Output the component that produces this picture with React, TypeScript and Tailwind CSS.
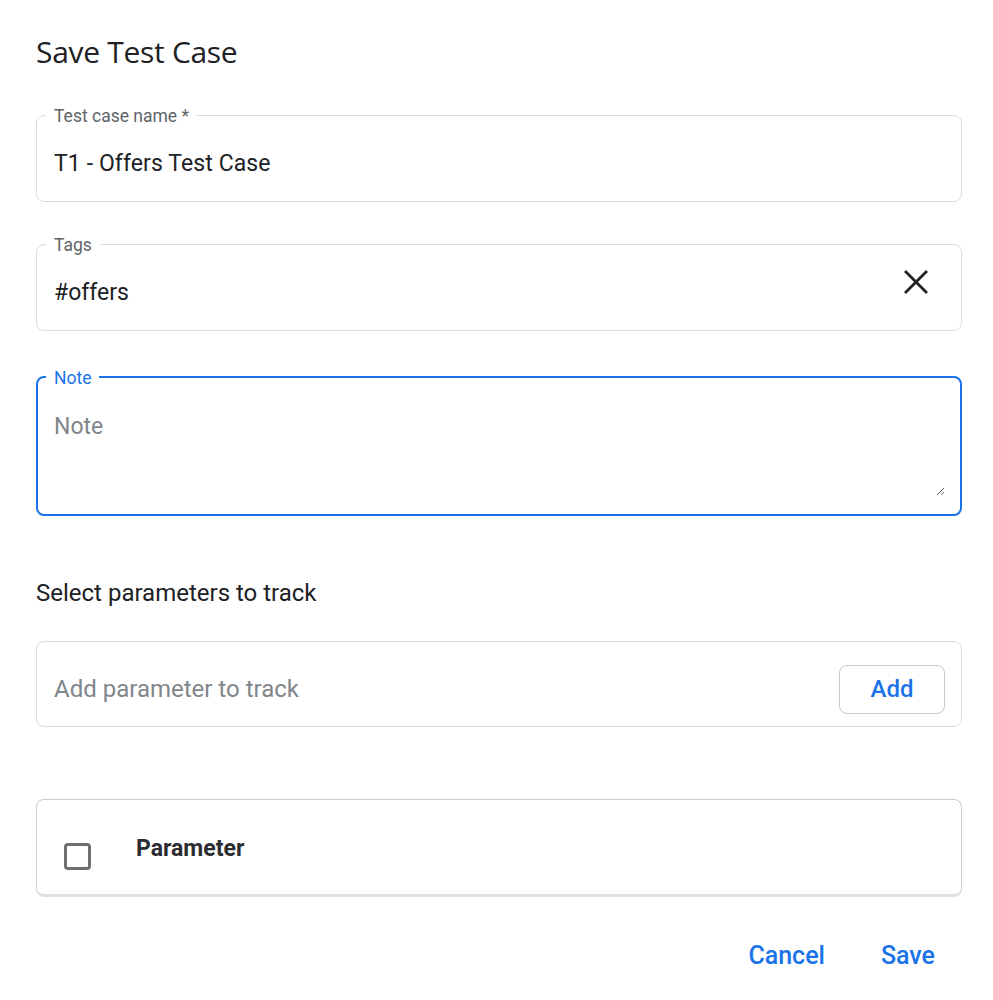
// ─── Outlined field (fieldset + legend notch) ───────────────────────────────
type FieldProps = {
    label: string;
    focused?: boolean;
    children: React.ReactNode;
};

const OutlinedField = ({ label, focused, children }: FieldProps) => (
    <fieldset
        className={
            focused
                ? "rounded-lg border-2 border-[#1a73e8] pl-[8px] pr-[15px]"
                : "rounded-lg border border-[#dadce0] pl-[9px] pr-4"
        }
    >
        <legend
            className={
                focused
                    ? "px-2 pt-[2px] text-[17.5px] leading-[18px] text-[#1a73e8]"
                    : "px-2 pt-[2px] text-[17.5px] leading-[18px] text-[#5f6368]"
            }
        >
            {label}
        </legend>
        {children}
    </fieldset>
);

const CloseIcon = () => (
    <svg width="24" height="24" viewBox="0 0 24 24" className="mr-[17px] mb-[24px] shrink-0">
        <path d="M1 1L23 23M23 1L1 23" stroke="#202124" strokeWidth="2.8" fill="none" />
    </svg>
);

export default function App() {
    return (
        <div className="min-h-screen bg-white font-['Roboto',sans-serif] text-[#202124]">
            <div className="ml-9 w-[926px] pt-[34px]">
                <h1 className="font-['Open_Sans',sans-serif] text-[30px] leading-9 tracking-[-0.3px] text-[#202124]">
                    Save Test Case
                </h1>

                {/* Test case name */}
                <div className="mt-[35px]">
                    <OutlinedField label="Test case name *">
                        <div className="flex h-[76px] items-center pl-2 pt-[3px] text-[23px] tracking-[0.1px]">
                            T1 - Offers Test Case
                        </div>
                    </OutlinedField>
                </div>

                {/* Tags */}
                <div className="mt-[32px]">
                    <OutlinedField label="Tags">
                        <div className="flex h-[76px] items-center justify-between pl-2 pt-[3px] text-[23px]">
                            <span>#offers</span>
                            <CloseIcon />
                        </div>
                    </OutlinedField>
                </div>

                {/* Note */}
                <div className="mt-[36px]">
                    <OutlinedField label="Note" focused>
                        <textarea
                            placeholder="Note"
                            className="mt-[26px] mb-[18px] block h-[83px] w-full resize-y pl-2 text-[23px] leading-7 text-[#202124] outline-none placeholder:text-[#80868b]"
                        />
                    </OutlinedField>
                </div>

                <div className="mt-[63px] text-[24px] leading-7 text-[#202124]">
                    Select parameters to track
                </div>

                {/* Add parameter */}
                <div className="mt-[34px] flex h-[86px] items-center justify-between rounded-lg border border-[#dadce0] pl-[17px] pr-4 pt-[10px]">
                    <span className="text-[24px] text-[#80868b]">Add parameter to track</span>
                    <button className="h-[49px] w-[106px] rounded-lg border border-[#cfc8c2] text-[24px] font-medium text-[#1a73e8]">
                        Add
                    </button>
                </div>

                {/* Parameter table */}
                <div className="mt-[72px] h-[98px] rounded-lg border border-[#d3ccc6] border-b-[3px] border-b-[#e0e0e0]">
                    <div className="flex h-full items-start">
                        <div className="ml-[27px] mt-[43px] h-[27px] w-[27px] rounded-[4px] border-[3px] border-[#6e6e6e]" />
                        <div className="ml-[45px] mt-[35px] text-[23px] font-bold leading-7 text-[#2b2d30]">
                            Parameter
                        </div>
                    </div>
                </div>

                {/* Actions */}
                <div className="mt-[45px] flex justify-end gap-[56px] pr-[27px]">
                    <button className="text-[25px] font-medium leading-7 text-[#1a73e8]">Cancel</button>
                    <button className="text-[25px] font-medium leading-7 text-[#1a73e8]">Save</button>
                </div>
            </div>
        </div>
    );
}
